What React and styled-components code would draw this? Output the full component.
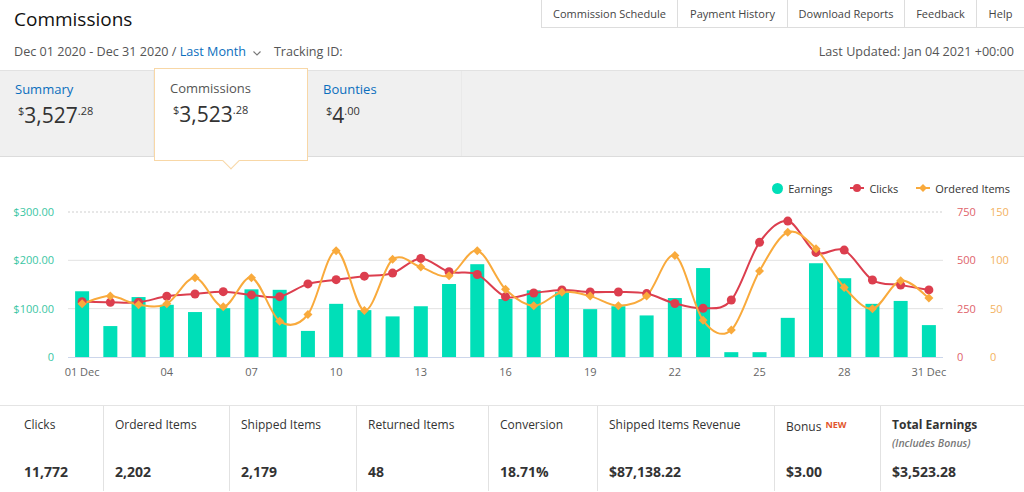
import React from "react";
import styled, { createGlobalStyle } from "styled-components";

const GlobalStyle = createGlobalStyle`
  body {
    margin: 0;
    background: #fff;
    font-family: "Open Sans", "Noto Sans", sans-serif;
    color: #333;
  }
  * { box-sizing: border-box; }
`;

const TEAL = "#00dfb8";
const RED = "#dc3e4e";
const ORANGE = "#f9aa3c";

const navItems = [
  { label: "Commission Schedule", w: 135 },
  { label: "Payment History", w: 110 },
  { label: "Download Reports", w: 117 },
  { label: "Feedback", w: 72 },
  { label: "Help", w: 48 },
];

const earnings = [136, 64, 124, 108, 93, 101, 140, 139, 54, 110, 97, 84, 105, 151, 192, 120, 138, 134, 99, 105, 86, 122, 184, 10, 10, 81, 194, 163, 110, 116, 66];
const clicks = [286, 283, 283, 314, 326, 338, 321, 312, 378, 400, 418, 434, 510, 441, 427, 312, 331, 347, 336, 336, 328, 277, 252, 295, 593, 703, 541, 553, 398, 372, 347];
const ordered = [55, 63, 54, 55, 82, 52, 82, 37, 44, 110, 48, 101, 93, 84, 110, 70, 53, 67, 63, 53, 63, 105, 38, 28, 89, 129, 112, 72, 50, 79, 61];

const stats = [
  { label: "Clicks", value: "11,772", w: 103 },
  { label: "Ordered Items", value: "2,202", w: 126 },
  { label: "Shipped Items", value: "2,179", w: 127 },
  { label: "Returned Items", value: "48", w: 132 },
  { label: "Conversion", value: "18.71%", w: 109 },
  { label: "Shipped Items Revenue", value: "$87,138.22", w: 177 },
  { label: "Bonus", value: "$3.00", w: 106, isNew: true },
  { label: "Total Earnings", value: "$3,523.28", w: 144, total: true },
];

const Page = styled.div`
  width: 1024px;
  height: 492px;
  overflow: hidden;
`;

const TopBar = styled.div`
  display: flex;
  justify-content: space-between;
  align-items: flex-start;
  height: 31px;
`;

const Title = styled.h1`
  margin: 6px 0 0 14px;
  font-size: 19px;
  line-height: 26px;
  font-weight: 400;
  color: #111;
`;

const Nav = styled.div`
  display: flex;
  height: 28px;
  border-left: 1px solid #ddd;
  border-bottom: 1px solid #ddd;
`;

const NavItem = styled.div`
  width: ${(p) => p.$w}px;
  text-align: center;
  font-size: 11px;
  line-height: 27px;
  color: #444;
  border-left: ${(p) => (p.$first ? "none" : "1px solid #ddd")};
  white-space: nowrap;
`;

const FilterBar = styled.div`
  display: flex;
  justify-content: space-between;
  align-items: center;
  height: 39px;
  padding: 2px 10px 0 14px;
  font-size: 12.6px;
  color: #555;
`;

const DateRange = styled.div`
  display: flex;
  align-items: center;
  white-space: pre;
`;

const BlueLink = styled.span`
  color: #0a6ebd;
`;

const Chevron = styled.svg`
  margin: 3px 13px 0 7px;
`;

const TabStrip = styled.div`
  display: flex;
  height: 87px;
  background: #f0f0f0;
  border-top: 1px solid #e2e2e2;
  border-bottom: 1px solid #dcdcdc;
`;

const Tab = styled.div`
  position: relative;
  width: 154px;
  padding: ${(p) => (p.$active ? "10px 15px 0" : "9px 15px 0")};
  background: ${(p) => (p.$active ? "#fff" : "transparent")};
  border: ${(p) => (p.$active ? "1px solid #f8d7a6" : "none")};
  border-right: 1px solid ${(p) => (p.$active ? "#f8d7a6" : "#e9e9e9")};
  margin: ${(p) => (p.$active ? "-3px 0 -5px" : "0")};
  z-index: ${(p) => (p.$active ? 2 : 1)};

  &::after {
    content: "";
    display: ${(p) => (p.$active ? "block" : "none")};
    position: absolute;
    left: 50%;
    bottom: -7px;
    width: 11px;
    height: 11px;
    background: #fff;
    border-right: 1px solid #f8d7a6;
    border-bottom: 1px solid #f8d7a6;
    transform: translateX(-50%) rotate(45deg);
  }
`;

const TabLabel = styled.div`
  font-size: 13px;
  line-height: 18px;
  color: ${(p) => (p.$active ? "#555" : "#0a6ebd")};
`;

const Amount = styled.div`
  display: flex;
  align-items: flex-start;
  margin: 4px 0 0 3px;
  color: #333;
`;

const Sup = styled.span`
  font-size: 11px;
  line-height: 13px;
  margin-top: 2px;
`;

const Big = styled.span`
  font-size: 21px;
  line-height: 26px;
`;

const ChartSection = styled.div`
  height: 248px;
  padding-top: 24px;
`;

const Legend = styled.div`
  display: flex;
  justify-content: flex-end;
  align-items: center;
  gap: 18px;
  height: 14px;
  padding-right: 14px;
  font-size: 11px;
  color: #333;
`;

const LegendItem = styled.div`
  display: flex;
  align-items: center;
  gap: 5px;
`;

const ChartSvg = styled.svg`
  display: block;
  margin-top: 4px;
`;

const Stats = styled.div`
  display: grid;
  grid-template-columns: ${stats.map((s) => s.w + "px").join(" ")};
  height: 86px;
  border-top: 1px solid #e4e4e4;
`;

const StatCell = styled.div`
  display: flex;
  flex-direction: column;
  padding: 11px 8px 10px ${(p) => (p.$first ? 24 : 11)}px;
  border-left: ${(p) => (p.$first ? "none" : "1px solid #e2e2e2")};
`;

const StatLabel = styled.div`
  font-size: 12px;
  line-height: 16px;
  font-weight: ${(p) => (p.$bold ? 700 : 400)};
  color: #333;
  white-space: nowrap;
`;

const NewTag = styled.span`
  margin-left: 4px;
  font-size: 9px;
  font-weight: 700;
  color: #e2562c;
  vertical-align: 3px;
`;

const SubLabel = styled.div`
  margin-top: 3px;
  font-size: 10.5px;
  line-height: 14px;
  font-style: italic;
  font-weight: 600;
  color: #777;
`;

const StatValue = styled.div`
  margin-top: auto;
  font-size: 14px;
  line-height: 18px;
  font-weight: 700;
  color: #333;
`;

// chart geometry
const PLOT_L = 68;
const PLOT_R = 943;
const BASE = 158;
const TOP = 13;
const H = BASE - TOP;
const step = (PLOT_R - PLOT_L) / 31;
const xAt = (i) => PLOT_L + step * (i + 0.5);

const smooth = (pts) => {
  let d = `M${pts[0][0]},${pts[0][1]}`;
  for (let i = 0; i < pts.length - 1; i++) {
    const p0 = pts[i - 1] || pts[i];
    const p1 = pts[i];
    const p2 = pts[i + 1];
    const p3 = pts[i + 2] || p2;
    const c1x = p1[0] + (p2[0] - p0[0]) / 6;
    const c1y = p1[1] + (p2[1] - p0[1]) / 6;
    const c2x = p2[0] - (p3[0] - p1[0]) / 6;
    const c2y = p2[1] - (p3[1] - p1[1]) / 6;
    d += ` C${c1x.toFixed(1)},${c1y.toFixed(1)} ${c2x.toFixed(1)},${c2y.toFixed(1)} ${p2[0].toFixed(1)},${p2[1].toFixed(1)}`;
  }
  return d;
};

const Chart = () => {
  const clickPts = clicks.map((v, i) => [xAt(i), BASE - (v * H) / 750]);
  const orderPts = ordered.map((v, i) => [xAt(i), BASE - (v * H) / 150]);
  const grid = [0, 1, 2, 3].map((k) => BASE - (k * H) / 3);
  const xLabels = ["01 Dec", "04", "07", "10", "13", "16", "19", "22", "25", "28", "31 Dec"];

  return (
    <ChartSvg width="1024" height="206" viewBox="0 0 1024 206" fontFamily="Open Sans, sans-serif" fontSize="11">
      {grid.map((y, k) =>
        k === 0 ? null : (
          <line
            key={k}
            x1={PLOT_L}
            x2={PLOT_R}
            y1={y}
            y2={y}
            stroke={k === 3 ? "#cfcfcf" : "#e2e2e2"}
            strokeDasharray={k === 3 ? "2 2" : undefined}
          />
        )
      )}
      {earnings.map((v, i) => {
        const h = (v * H) / 300;
        return <rect key={i} x={xAt(i) - 7} y={BASE - h} width="14" height={h} fill={TEAL} />;
      })}
      <line x1={PLOT_L} x2={PLOT_R} y1={BASE + 0.5} y2={BASE + 0.5} stroke="#ccd6eb" />

      <path d={smooth(clickPts)} fill="none" stroke={RED} strokeWidth="2" />
      <path d={smooth(orderPts)} fill="none" stroke={ORANGE} strokeWidth="2" />
      {clickPts.map(([x, y], i) => (
        <circle key={i} cx={x} cy={y} r="4.5" fill={RED} />
      ))}
      {orderPts.map(([x, y], i) => (
        <path key={i} d={`M${x},${y - 4.5} L${x + 4.5},${y} L${x},${y + 4.5} L${x - 4.5},${y} Z`} fill={ORANGE} />
      ))}

      {["0", "$100.00", "$200.00", "$300.00"].map((t, k) => (
        <text key={t} x="54" y={grid[k] + 4} textAnchor="end" fill="#3cc6a4">
          {t}
        </text>
      ))}
      {["0", "250", "500", "750"].map((t, k) => (
        <text key={t} x="957" y={grid[k] + 4} fill="#e0636b">
          {t}
        </text>
      ))}
      {["0", "50", "100", "150"].map((t, k) => (
        <text key={t} x="990" y={grid[k] + 4} fill="#f3b260">
          {t}
        </text>
      ))}
      {xLabels.map((t, k) => (
        <text key={t} x={xAt(k * 3)} y="177" textAnchor="middle" fill="#666">
          {t}
        </text>
      ))}
    </ChartSvg>
  );
};

const Money = ({ whole, cents }) => (
  <Amount>
    <Sup>$</Sup>
    <Big>{whole}</Big>
    <Sup>.{cents}</Sup>
  </Amount>
);

export default function App() {
  return (
    <Page>
      <GlobalStyle />
      <TopBar>
        <Title>Commissions</Title>
        <Nav>
          {navItems.map((n, i) => (
            <NavItem key={n.label} $w={n.w} $first={i === 0}>
              {n.label}
            </NavItem>
          ))}
        </Nav>
      </TopBar>

      <FilterBar>
        <DateRange>
          Dec 01 2020 - Dec 31 2020 / <BlueLink>Last Month</BlueLink>
          <Chevron width="8" height="5" viewBox="0 0 8 5">
            <path d="M0.5 0.5 L4 4 L7.5 0.5" fill="none" stroke="#777" strokeWidth="1.1" />
          </Chevron>
          Tracking ID:
        </DateRange>
        <div>Last Updated: Jan 04 2021 +00:00</div>
      </FilterBar>

      <TabStrip>
        <Tab>
          <TabLabel>Summary</TabLabel>
          <Money whole="3,527" cents="28" />
        </Tab>
        <Tab $active>
          <TabLabel $active>Commissions</TabLabel>
          <Money whole="3,523" cents="28" />
        </Tab>
        <Tab>
          <TabLabel>Bounties</TabLabel>
          <Money whole="4" cents="00" />
        </Tab>
      </TabStrip>

      <ChartSection>
        <Legend>
          <LegendItem>
            <svg width="11" height="11" viewBox="0 0 11 11">
              <circle cx="5.5" cy="5.5" r="5.5" fill={TEAL} />
            </svg>
            Earnings
          </LegendItem>
          <LegendItem>
            <svg width="14" height="10" viewBox="0 0 14 10">
              <line x1="0" x2="14" y1="5" y2="5" stroke={RED} strokeWidth="2" />
              <circle cx="7" cy="5" r="4" fill={RED} />
            </svg>
            Clicks
          </LegendItem>
          <LegendItem>
            <svg width="14" height="10" viewBox="0 0 14 10">
              <line x1="0" x2="14" y1="5" y2="5" stroke={ORANGE} strokeWidth="2" />
              <path d="M7 1 L11 5 L7 9 L3 5 Z" fill={ORANGE} />
            </svg>
            Ordered Items
          </LegendItem>
        </Legend>
        <Chart />
      </ChartSection>

      <Stats>
        {stats.map((s, i) => (
          <StatCell key={s.label} $first={i === 0}>
            <StatLabel $bold={s.total}>
              {s.label}
              {s.isNew && <NewTag>NEW</NewTag>}
            </StatLabel>
            {s.total && <SubLabel>(Includes Bonus)</SubLabel>}
            <StatValue>{s.value}</StatValue>
          </StatCell>
        ))}
      </Stats>
    </Page>
  );
}
